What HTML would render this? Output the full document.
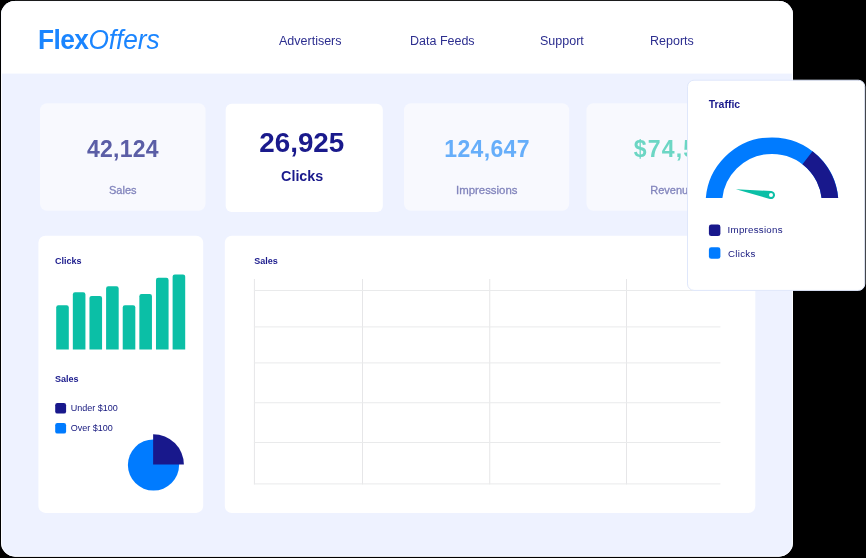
<!DOCTYPE html>
<html>
<head>
<meta charset="utf-8">
<style>
*{margin:0;padding:0;box-sizing:border-box;}
html,body{width:866px;height:558px;overflow:hidden;background:#000;}
body{font-family:"Liberation Sans",sans-serif;position:relative;}
svg{position:absolute;left:0;top:0;}
.t{position:absolute;white-space:nowrap;}
#tx{position:absolute;left:0;top:0;width:866px;height:558px;will-change:transform;}
.c{text-align:center;}
.logo{font-size:28.5px;line-height:32px;color:#1a85ff;letter-spacing:-0.6px;transform:scaleX(0.923);transform-origin:0 0;}
.logo b{font-weight:700;}
.logo i{font-weight:400;font-style:italic;letter-spacing:-0.1px;}
.nav{font-size:12.5px;line-height:16px;color:#2c2e8f;}
.num{font-weight:700;}
.lbl{font-size:11px;line-height:14px;color:#8184bc;-webkit-text-stroke:0.3px #8184bc;}
.h{font-size:9px;font-weight:700;color:#1a1a8c;line-height:12px;}
.lg{font-size:9px;line-height:12px;color:#15177e;}
</style>
</head>
<body>
<svg width="866" height="558" viewBox="0 0 866 558">
<defs><clipPath id="pc"><rect x="1" y="0.9" width="792" height="555.8" rx="14"/></clipPath><clipPath id="gc"><rect x="690" y="120" width="170" height="77.9"/></clipPath></defs>
<g clip-path="url(#pc)">
<rect x="0" y="0" width="800" height="558" fill="#eef2ff"/>
<rect x="0" y="0" width="800" height="73.6" fill="#fff"/>
<rect x="40" y="103.2" width="165.5" height="107.5" rx="7" fill="#f8f9fe" />
<rect x="225.7" y="103.7" width="157.1" height="108.3" rx="6" fill="#fff" />
<rect x="404" y="103.2" width="165.2" height="107.5" rx="7" fill="#f8f9fe" />
<rect x="586.5" y="103.2" width="165.5" height="107.5" rx="7" fill="#f8f9fe" />
<rect x="38.4" y="235.7" width="164.8" height="277.2" rx="7" fill="#fff" />
<rect x="224.8" y="235.7" width="530.5" height="277.3" rx="7" fill="#fff" />
<path d="M56.20 349.5 V307.50 Q56.20 305.30 58.40 305.30 H66.60 Q68.80 305.30 68.80 307.50 V349.5 Z" fill="#0bbfa6"/>
<path d="M72.83 349.5 V294.50 Q72.83 292.30 75.03 292.30 H83.23 Q85.43 292.30 85.43 294.50 V349.5 Z" fill="#0bbfa6"/>
<path d="M89.46 349.5 V298.10 Q89.46 295.90 91.66 295.90 H99.86 Q102.06 295.90 102.06 298.10 V349.5 Z" fill="#0bbfa6"/>
<path d="M106.09 349.5 V288.40 Q106.09 286.20 108.29 286.20 H116.49 Q118.69 286.20 118.69 288.40 V349.5 Z" fill="#0bbfa6"/>
<path d="M122.72 349.5 V307.50 Q122.72 305.30 124.92 305.30 H133.12 Q135.32 305.30 135.32 307.50 V349.5 Z" fill="#0bbfa6"/>
<path d="M139.35 349.5 V296.30 Q139.35 294.10 141.55 294.10 H149.75 Q151.95 294.10 151.95 296.30 V349.5 Z" fill="#0bbfa6"/>
<path d="M155.98 349.5 V280.00 Q155.98 277.80 158.18 277.80 H166.38 Q168.58 277.80 168.58 280.00 V349.5 Z" fill="#0bbfa6"/>
<path d="M172.61 349.5 V276.70 Q172.61 274.50 174.81 274.50 H183.01 Q185.21 274.50 185.21 276.70 V349.5 Z" fill="#0bbfa6"/>
<rect x="55.2" y="403" width="10.9" height="10.6" rx="2.2" fill="#18188c" />
<rect x="55.2" y="423" width="10.9" height="10.6" rx="2.2" fill="#007bff" />
<circle cx="153.5" cy="465" r="25.6" fill="#007bff"/>
<path d="M153.1 464.6 V434.2 A30.7 30.5 0 0 1 183.9 464.6 Z" fill="#18188c"/>
<rect x="253.9" y="279" width="1" height="205.4" fill="#e6e6e8"/>
<rect x="362.0" y="279" width="1" height="205.4" fill="#e6e6e8"/>
<rect x="489.25" y="279" width="1" height="205.4" fill="#e6e6e8"/>
<rect x="626.0" y="279" width="1" height="205.4" fill="#e6e6e8"/>
<rect x="253.9" y="290.0" width="466.5" height="1" fill="#e9eaeb"/>
<rect x="253.9" y="326.4" width="466.5" height="1" fill="#e9eaeb"/>
<rect x="253.9" y="362.4" width="466.5" height="1" fill="#e9eaeb"/>
<rect x="253.9" y="402.25" width="466.5" height="1" fill="#e9eaeb"/>
<rect x="253.9" y="442.0" width="466.5" height="1" fill="#e9eaeb"/>
<rect x="253.9" y="483.4" width="466.5" height="1" fill="#e9eaeb"/>
</g>
<rect x="1.5" y="1.4" width="791" height="554.8" rx="13.5" fill="none" stroke="#fbfcff" stroke-width="1"/>
<rect x="687.5" y="80.2" width="177.3" height="210.2" rx="6.5" fill="#fff" stroke="#dfe7fb" stroke-width="1"/>
<g clip-path="url(#gc)">
<circle cx="772" cy="203.8" r="58.150000000000006" fill="none" stroke="#007bff" stroke-width="16.500000000000007"/>
<path d="M807.48 157.73 A58.150000000000006 58.150000000000006 0 0 1 830.15 203.8 V208.8" fill="none" stroke="#18188c" stroke-width="16.500000000000007"/>
</g>
<path d="M735.9 189.2 L771.22 191.11 A4.0 4.0 0 1 1 769.90 198.95 Z" fill="#0bbfa6"/>
<circle cx="771.0" cy="195.1" r="2.0" fill="#fff"/>
<rect x="708.9" y="224.6" width="11.5" height="11.5" rx="2.4" fill="#18188c" />
<rect x="708.9" y="247.3" width="11.5" height="11.5" rx="2.4" fill="#007bff" />
</svg>
<div id="tx">
<div class="t logo" style="left:38px;top:23.2px;"><b>Flex</b><i>Offers</i></div>
<div class="t nav" style="left:279px;top:32.9px;">Advertisers</div>
<div class="t nav" style="left:410px;top:32.9px;">Data Feeds</div>
<div class="t nav" style="left:540px;top:32.9px;">Support</div>
<div class="t nav" style="left:650px;top:32.9px;">Reports</div>
<div class="t num c" style="left:40.2px;width:165.5px;top:134.6px;font-size:23px;line-height:28px;color:#5b5ea6;letter-spacing:0.25px;">42,124</div>
<div class="t lbl c" style="left:40px;width:165.5px;top:183px;">Sales</div>
<div class="t num c" style="left:221.5px;width:160.5px;top:127.3px;font-size:27.8px;line-height:32px;color:#1a1a8c;">26,925</div>
<div class="t num c" style="left:221.9px;width:160.5px;top:166.6px;font-size:14.3px;line-height:18px;color:#1a1a8c;">Clicks</div>
<div class="t num c" style="left:404.3px;width:165.5px;top:134.6px;font-size:23px;line-height:28px;color:#66aefa;letter-spacing:0.35px;">124,647</div>
<div class="t lbl c" style="left:404px;width:165.5px;top:183px;font-size:11.4px;">Impressions</div>
<div class="t num" style="left:633.8px;width:53px;overflow:hidden;top:134.6px;font-size:23px;line-height:28px;color:#6cd6c4;letter-spacing:1.2px;">$74,562</div>
<div class="t lbl" style="left:650.3px;width:36.5px;overflow:hidden;top:183px;">Revenue</div>
<div class="t h" style="left:55px;top:254.6px;">Clicks</div>
<div class="t h" style="left:55px;top:373px;">Sales</div>
<div class="t h" style="left:254.3px;top:254.6px;">Sales</div>
<div class="t lg" style="left:70.7px;top:401.8px;">Under $100</div>
<div class="t lg" style="left:70.7px;top:422px;">Over $100</div>
<div class="t h" style="left:708.7px;top:97.8px;font-size:10.5px;">Traffic</div>
<div class="t lg" style="left:727.6px;top:224px;font-size:9.7px;letter-spacing:0.27px;">Impressions</div>
<div class="t lg" style="left:728.1px;top:247.5px;font-size:9.7px;letter-spacing:0.27px;">Clicks</div>
</div>
</body>
</html>
